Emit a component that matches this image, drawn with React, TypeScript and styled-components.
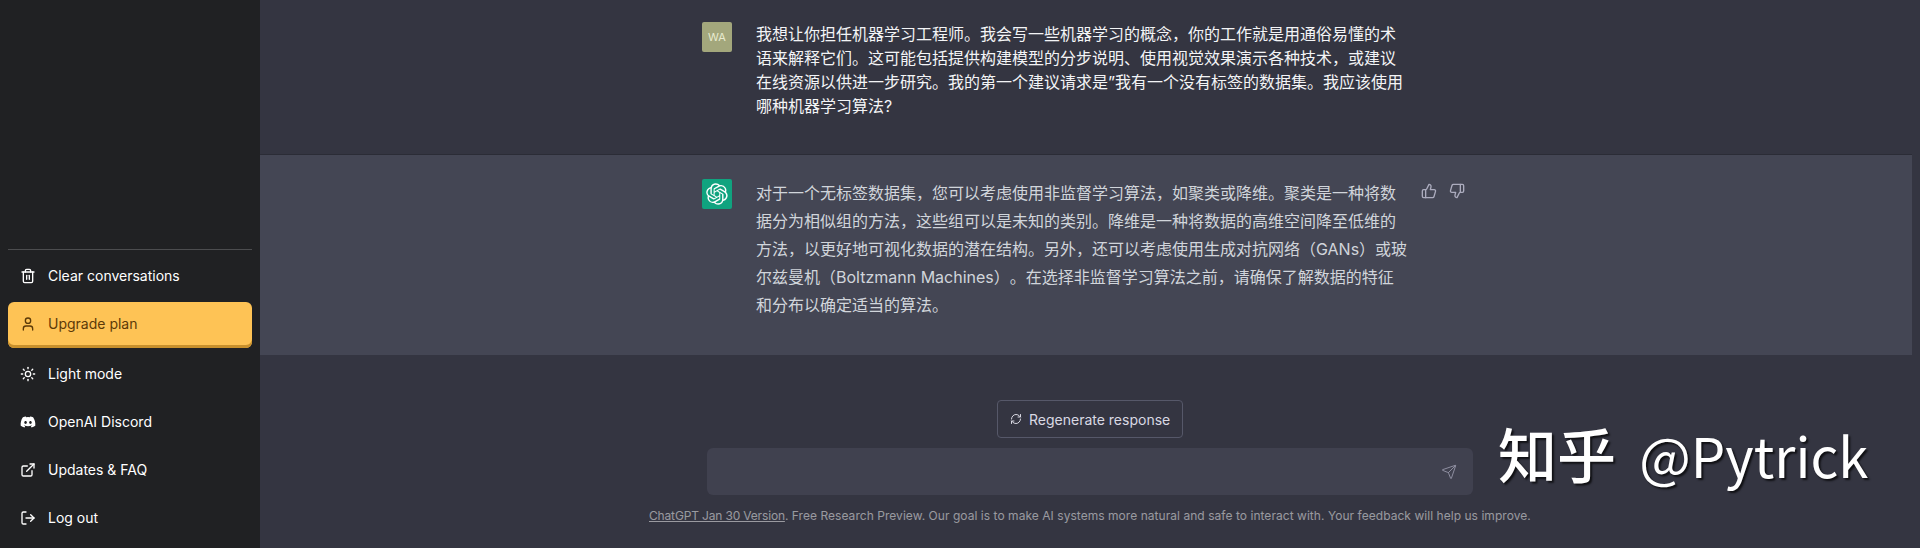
import React from "react";
import styled, { createGlobalStyle } from "styled-components";
import { Trash2, User, Sun, ExternalLink, LogOut, ThumbsUp, ThumbsDown, RefreshCw, Send } from "lucide-react";
import { FaDiscord } from "react-icons/fa";

const Global = createGlobalStyle`
  html, body { margin: 0; padding: 0; height: 100%; background: #343541; overflow: hidden; }
  body { font-family: Inter, "Noto Sans CJK SC", "Noto Sans", sans-serif; }
`;

const Page = styled.div`
  display: flex;
  width: 1920px;
  height: 548px;
  overflow: hidden;
`;

const Sidebar = styled.aside`
  width: 260px;
  flex: none;
  background: #202123;
  display: flex;
  flex-direction: column;
  justify-content: flex-end;
  padding: 0 8px 8px;
  box-sizing: border-box;
`;

const Divider = styled.div`
  height: 1px;
  background: rgba(255, 255, 255, 0.2);
`;

const NavItem = styled.a<{ $gold?: boolean }>`
  display: flex;
  align-items: center;
  gap: 12px;
  height: ${(p) => (p.$gold ? "46px" : "44px")};
  margin-top: 4px;
  padding: 0 12px ${(p) => (p.$gold ? "2px" : "0")};
  box-sizing: border-box;
  border-radius: 6px;
  font-size: 14px;
  line-height: 20px;
  color: ${(p) => (p.$gold ? "#5c3a08" : "#ffffff")};
  background: ${(p) => (p.$gold ? "#fec355" : "transparent")};
  box-shadow: ${(p) => (p.$gold ? "inset 0 -3px 0 #c8902c" : "none")};
  svg { flex: none; width: 16px; height: 16px; }
`;

const Main = styled.main`
  flex: 1;
  min-width: 0;
  display: flex;
  flex-direction: column;
  background: #343541;
  position: relative;
`;

const Row = styled.section<{ $alt?: boolean }>`
  display: flex;
  justify-content: flex-start;
  box-sizing: border-box;
  height: ${(p) => (p.$alt ? "201px" : "154px")};
  padding: ${(p) => (p.$alt ? "24px 0 0 442px" : "22px 0 0 442px")};
  background: ${(p) => (p.$alt ? "#444654" : "#343541")};
  border-top: ${(p) => (p.$alt ? "1px solid #2b2c36" : "none")};
  margin-right: ${(p) => (p.$alt ? "8px" : "0")};
`;

const Avatar = styled.div<{ $bg: string }>`
  width: 30px;
  height: 30px;
  flex: none;
  border-radius: 2px;
  background: ${(p) => p.$bg};
  color: #e8ebd0;
  font-size: 11px;
  display: flex;
  align-items: center;
  justify-content: center;
  margin-right: 24px;
`;

const Message = styled.div<{ $alt?: boolean }>`
  width: 652px;
  flex: none;
  font-family: Inter, "Noto Sans CJK SC", sans-serif;
  font-size: 16px;
  line-height: ${(p) => (p.$alt ? "28px" : "24px")};
  color: ${(p) => (p.$alt ? "#d1d5db" : "#f3f4f6")};
  text-spacing-trim: space-all;
`;

const Votes = styled.div`
  display: flex;
  gap: 12px;
  margin: 4px 0 0 13px;
  color: #acacbe;
  svg { width: 16px; height: 16px; }
`;

const Regenerate = styled.button`
  display: flex;
  align-items: center;
  gap: 7px;
  align-self: flex-start;
  margin: 45px 0 0 737px;
  height: 38px;
  padding: 0 12px;
  box-sizing: border-box;
  background: #343541;
  border: 1px solid #565869;
  border-radius: 4px;
  color: #d9d9e3;
  font-family: Inter, sans-serif;
  font-size: 14px;
  svg { width: 12px; height: 12px; }
`;

const Composer = styled.div`
  display: flex;
  align-items: center;
  justify-content: flex-end;
  align-self: flex-start;
  width: 766px;
  height: 47px;
  margin: 10px 0 0 447px;
  padding-right: 16px;
  box-sizing: border-box;
  background: #40414f;
  border-radius: 6px;
  color: #8e8ea0;
  svg { width: 16px; height: 16px; }
`;

const Footer = styled.p`
  margin: 13px 0 0;
  text-align: left;
  padding-left: 389px;
  font-size: 12px;
  line-height: 16px;
  letter-spacing: 0.045px;
  color: rgba(255, 255, 255, 0.5);
  white-space: nowrap;
  a { text-decoration: underline; color: inherit; letter-spacing: -0.16px; }
`;

const Watermark = styled.div`
  position: absolute;
  left: 1238px;
  top: 413px;
  font-family: "Noto Sans CJK SC", sans-serif;
  font-size: 59px;
  line-height: 80px;
  font-weight: 500;
  color: #ffffff;
  text-shadow: 2px 2px 2px rgba(0, 0, 0, 0.7);
  white-space: nowrap;
`;

const Handle = styled.span`
  font-size: 54.5px;
  font-weight: 400;
  margin-left: 10px;
`;

function OpenAIMark() {
  return (
    <svg width="22" height="22" viewBox="0 0 41 41" fill="none">
      <path
        d="M37.53 16.87a9.96 9.96 0 0 0-.86-8.18 10.08 10.08 0 0 0-10.85-4.83A9.97 9.97 0 0 0 18.3.5a10.08 10.08 0 0 0-9.61 6.98 9.97 9.97 0 0 0-6.66 4.83 10.08 10.08 0 0 0 1.24 11.82 9.96 9.96 0 0 0 .86 8.18 10.08 10.08 0 0 0 10.85 4.83 9.96 9.96 0 0 0 7.52 3.36 10.08 10.08 0 0 0 9.61-6.99 9.97 9.97 0 0 0 6.66-4.83 10.08 10.08 0 0 0-1.24-11.81ZM22.5 37.89a7.47 7.47 0 0 1-4.8-1.74l.24-.13 7.96-4.6a1.3 1.3 0 0 0 .65-1.13V19.07l3.37 1.94a.12.12 0 0 1 .06.09v9.31a7.5 7.5 0 0 1-7.48 7.48ZM6.4 31.01a7.47 7.47 0 0 1-.9-5.03l.24.14 7.96 4.6a1.3 1.3 0 0 0 1.3 0l9.72-5.61v3.88a.12.12 0 0 1-.05.1l-8.05 4.65a7.5 7.5 0 0 1-10.22-2.73ZM4.3 13.62a7.47 7.47 0 0 1 3.9-3.29v9.47a1.3 1.3 0 0 0 .65 1.12l9.72 5.61-3.37 1.95a.12.12 0 0 1-.11 0l-8.05-4.65a7.5 7.5 0 0 1-2.74-10.21Zm27.66 6.44-9.72-5.62 3.36-1.94a.12.12 0 0 1 .12 0l8.05 4.65a7.48 7.48 0 0 1-1.16 13.5v-9.47a1.3 1.3 0 0 0-.65-1.12Zm3.35-5.04-.24-.14-7.95-4.64a1.3 1.3 0 0 0-1.31 0l-9.72 5.61v-3.88a.12.12 0 0 1 .05-.1l8.05-4.64a7.48 7.48 0 0 1 11.12 7.79ZM14.22 21.96l-3.37-1.94a.12.12 0 0 1-.06-.1v-9.3a7.48 7.48 0 0 1 12.27-5.75l-.24.13-7.96 4.6a1.3 1.3 0 0 0-.65 1.13l.01 11.23Zm1.83-3.94 4.33-2.5 4.33 2.5v5l-4.33 2.5-4.33-2.5v-5Z"
        fill="#fff"
      />
    </svg>
  );
}

const nav = [
  { label: "Clear conversations", icon: <Trash2 strokeWidth={2} /> },
  { label: "Upgrade plan", icon: <User strokeWidth={2} />, gold: true },
  { label: "Light mode", icon: <Sun strokeWidth={2} /> },
  { label: "OpenAI Discord", icon: <FaDiscord /> },
  { label: "Updates & FAQ", icon: <ExternalLink strokeWidth={2} /> },
  { label: "Log out", icon: <LogOut strokeWidth={2} /> },
];

export default function App() {
  return (
    <Page>
      <Global />
      <Sidebar>
        <Divider />
        {nav.map((n) => (
          <NavItem key={n.label} $gold={n.gold}>
            {n.icon}
            {n.label}
          </NavItem>
        ))}
      </Sidebar>
      <Main>
        <Row>
          <Avatar $bg="#a3a77c">WA</Avatar>
          <Message>
            我想让你担任机器学习工程师。我会写一些机器学习的概念，你的工作就是用通俗易懂的术语来解释它们。这可能包括提供构建模型的分步说明、使用视觉效果演示各种技术，或建议在线资源以供进一步研究。我的第一个建议请求是”我有一个没有标签的数据集。我应该使用哪种机器学习算法?
          </Message>
        </Row>
        <Row $alt>
          <Avatar $bg="#10a37f">
            <OpenAIMark />
          </Avatar>
          <Message $alt>
            对于一个无标签数据集，您可以考虑使用非监督学习算法，如聚类或降维。聚类是一种将数据分为相似组的方法，这些组可以是未知的类别。降维是一种将数据的高维空间降至低维的方法，以更好地可视化数据的潜在结构。另外，还可以考虑使用生成对抗网络（GANs）或玻尔兹曼机（Boltzmann Machines）。在选择非监督学习算法之前，请确保了解数据的特征和分布以确定适当的算法。
          </Message>
          <Votes>
            <ThumbsUp />
            <ThumbsDown />
          </Votes>
        </Row>
        <Regenerate>
          <RefreshCw />
          Regenerate response
        </Regenerate>
        <Composer>
          <Send strokeWidth={1.5} />
        </Composer>
        <Footer>
          <a>ChatGPT Jan 30 Version</a>. Free Research Preview. Our goal is to make AI systems more natural and safe to interact with. Your feedback will help us improve.
        </Footer>
        <Watermark>
          知乎 <Handle>@Pytrick</Handle>
        </Watermark>
      </Main>
    </Page>
  );
}
